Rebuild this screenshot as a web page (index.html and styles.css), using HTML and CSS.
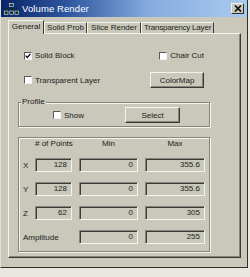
FILE: index.html
```html
<!DOCTYPE html>
<html lang="en">
<head>
  <meta charset="UTF-8" />
  <title>Volume Render</title>
  <link rel="stylesheet" href="styles.css">
</head>
<body>

  <div class="window">
    <div class="titlebar">
      <svg class="app-icon" viewBox="0 0 15 12" width="15" height="12">
        <path d="M7.5 3 V6 M2 6 H13 M2 6 V8 M7.5 6 V8 M13 6 V8" stroke="#0d2a1c" stroke-width="1.2" fill="none"/>
        <rect x="5.5" y="0.5" width="4" height="3" fill="#1c3a2a" stroke="#e8f0ff" stroke-width="0.6"/>
        <rect x="0.5" y="8" width="3.5" height="3.5" fill="#16301f" stroke="#dfe9ff" stroke-width="0.6"/>
        <rect x="5.8" y="8" width="3.5" height="3.5" fill="#16301f" stroke="#dfe9ff" stroke-width="0.6"/>
        <rect x="11" y="8" width="3.5" height="3.5" fill="#16301f" stroke="#dfe9ff" stroke-width="0.6"/>
      </svg>
      <span class="title">Volume Render</span>
      <span class="close-btn">
        <svg viewBox="0 0 8 7" width="8" height="7">
          <path d="M1 0.5 L7 6.5 M7 0.5 L1 6.5" stroke="#111" stroke-width="1.7"/>
        </svg>
      </span>
    </div>

    <div class="tabs">
      <div class="tab active tab-general">General</div>
      <div class="tab tab-solid">Solid Prob</div>
      <div class="tab tab-slice">Slice Render</div>
      <div class="tab tab-transp">Transparency Layer</div>
    </div>

    <div class="panel">
      <div class="options">
        <label class="check"><span class="box">
          <svg viewBox="0 0 6 6" width="6" height="6"><path d="M0.7 2.6 L2.3 4.4 L5.4 0.9" stroke="#111" stroke-width="1.4" fill="none"/></svg>
        </span>Solid Block</label>
        <label class="check right"><span class="box"></span>Chair Cut</label>
        <label class="check"><span class="box"></span>Transparent Layer</label>
        <button class="btn right">ColorMap</button>
      </div>

      <fieldset class="group profile">
        <legend>Profile</legend>
        <div class="profile-row">
          <label class="check"><span class="box"></span>Show</label>
          <button class="btn btn-select">Select</button>
        </div>
      </fieldset>

      <div class="group ranges">
        <span></span>
        <span class="head">#&nbsp;of Points</span>
        <span class="head">Min</span>
        <span class="head">Max</span>

        <span class="axis">X</span>
        <span class="field">128</span>
        <span class="field">0</span>
        <span class="field">355.6</span>

        <span class="axis">Y</span>
        <span class="field">128</span>
        <span class="field">0</span>
        <span class="field">355.6</span>

        <span class="axis">Z</span>
        <span class="field">62</span>
        <span class="field">0</span>
        <span class="field">305</span>

        <span class="axis wide">Amplitude</span>
        <span class="field">0</span>
        <span class="field">255</span>
      </div>
    </div>
  </div>

</body>
</html>
```

FILE: styles.css
```css
* { box-sizing: border-box; }
html, body { height: 100%; }
body {
  margin: 0; background: #e8e7e0; overflow: hidden;
  font-family: "Liberation Sans", Arial, sans-serif; font-size: 8px; color: #1c1c1a;
}

.window {
  width: 248px; height: 268px; background: #c9c8ba;
  border-left: 1px solid #e2e1d8; border-right: 1px solid #2d2d2a; border-bottom: 1px solid #2d2d2a;
  display: flex; flex-direction: column;
}

.titlebar {
  height: 17px; display: flex; align-items: center; padding: 0 2px 0 2px;
  background: linear-gradient(90deg, #0a2368 0%, #2f59a0 28%, #86acdf 60%, #a9caef 100%);
  color: #fff;
}
.app-icon { margin: 0 3px 0 1px; }
.title { flex: 1; font-size: 9.5px; letter-spacing: 0.1px; }
.close-btn {
  width: 13px; height: 11px; background: #c9c8ba; margin-right: 1px;
  border: 1px solid; border-color: #f4f4ee #2d2d2a #2d2d2a #f4f4ee;
  display: flex; align-items: center; justify-content: center;
}

.tabs {
  height: 13px; margin: 3px 0 0 7px;
  display: flex; align-items: flex-end; position: relative; z-index: 1;
}
.tab {
  height: 11px; line-height: 10px; text-align: center; white-space: nowrap;
  border: 1px solid; border-bottom: none;
  border-color: #f4f4ee #3a3a36 transparent #f4f4ee;
}
.tab.active { height: 14px; margin-bottom: -1px; background: #c9c8ba; line-height: 11px; }
.tab-general { width: 36px; }
.tab-solid { width: 43px; }
.tab-slice { width: 54px; }
.tab-transp { width: 73px; letter-spacing: -0.2px; }

.panel {
  margin: 0 6px 0 7px; padding: 16px 30px 5px 9px;
  border: 1px solid; border-color: #f4f4ee #3a3a36 #3a3a36 #f4f4ee;
  box-shadow: inset -1px -1px 0 #86857a;
}

.options {
  display: grid; grid-template-columns: 1fr auto; row-gap: 11px;
  align-items: center; padding: 0 6px;
}
.options .right { justify-self: end; }

.check { display: flex; align-items: center; gap: 3px; height: 11px; white-space: nowrap; }
.box {
  width: 8px; height: 8px; background: #fff; display: flex; align-items: center; justify-content: center;
  border: 1px solid; border-color: #5a5a55 #f4f4ee #f4f4ee #5a5a55;
}

.btn {
  width: 54px; height: 16px; padding: 0; background: #c9c8ba;
  font: inherit; color: inherit;
  border: 1px solid; border-color: #f4f4ee #3a3a36 #3a3a36 #f4f4ee;
  box-shadow: inset -1px -1px 0 #86857a;
}
.btn-select { width: 55px; }

.group {
  margin: 0; min-width: 0;
  border: 1px solid #86857a;
  box-shadow: inset 1px 1px 0 #f4f4ee, 1px 1px 0 #f4f4ee;
}
.profile { margin-top: 9px; padding: 0 29px 3px 2px; }
.profile legend { padding: 0 1px; line-height: 10px; background: #c9c8ba; }
.profile-row { display: flex; align-items: center; justify-content: space-between; padding-left: 32px; }

.ranges {
  margin-top: 10px; padding: 2px 4px 7px 4px;
  display: grid; grid-template-columns: 5px 37px 59px 60px;
  grid-template-rows: 8px repeat(4, 14px);
  column-gap: 7px; row-gap: 10px; align-items: center;
}
.head { text-align: center; line-height: 8px; white-space: nowrap; }
.axis { white-space: nowrap; }
.axis.wide { grid-column: 1 / 3; }
.field {
  height: 14px; line-height: 12px; text-align: right; padding-right: 4px;
  border: 1px solid; border-color: #86857a #f4f4ee #f4f4ee #86857a;
  box-shadow: inset 1px 1px 0 #3a3a36;
}
```
